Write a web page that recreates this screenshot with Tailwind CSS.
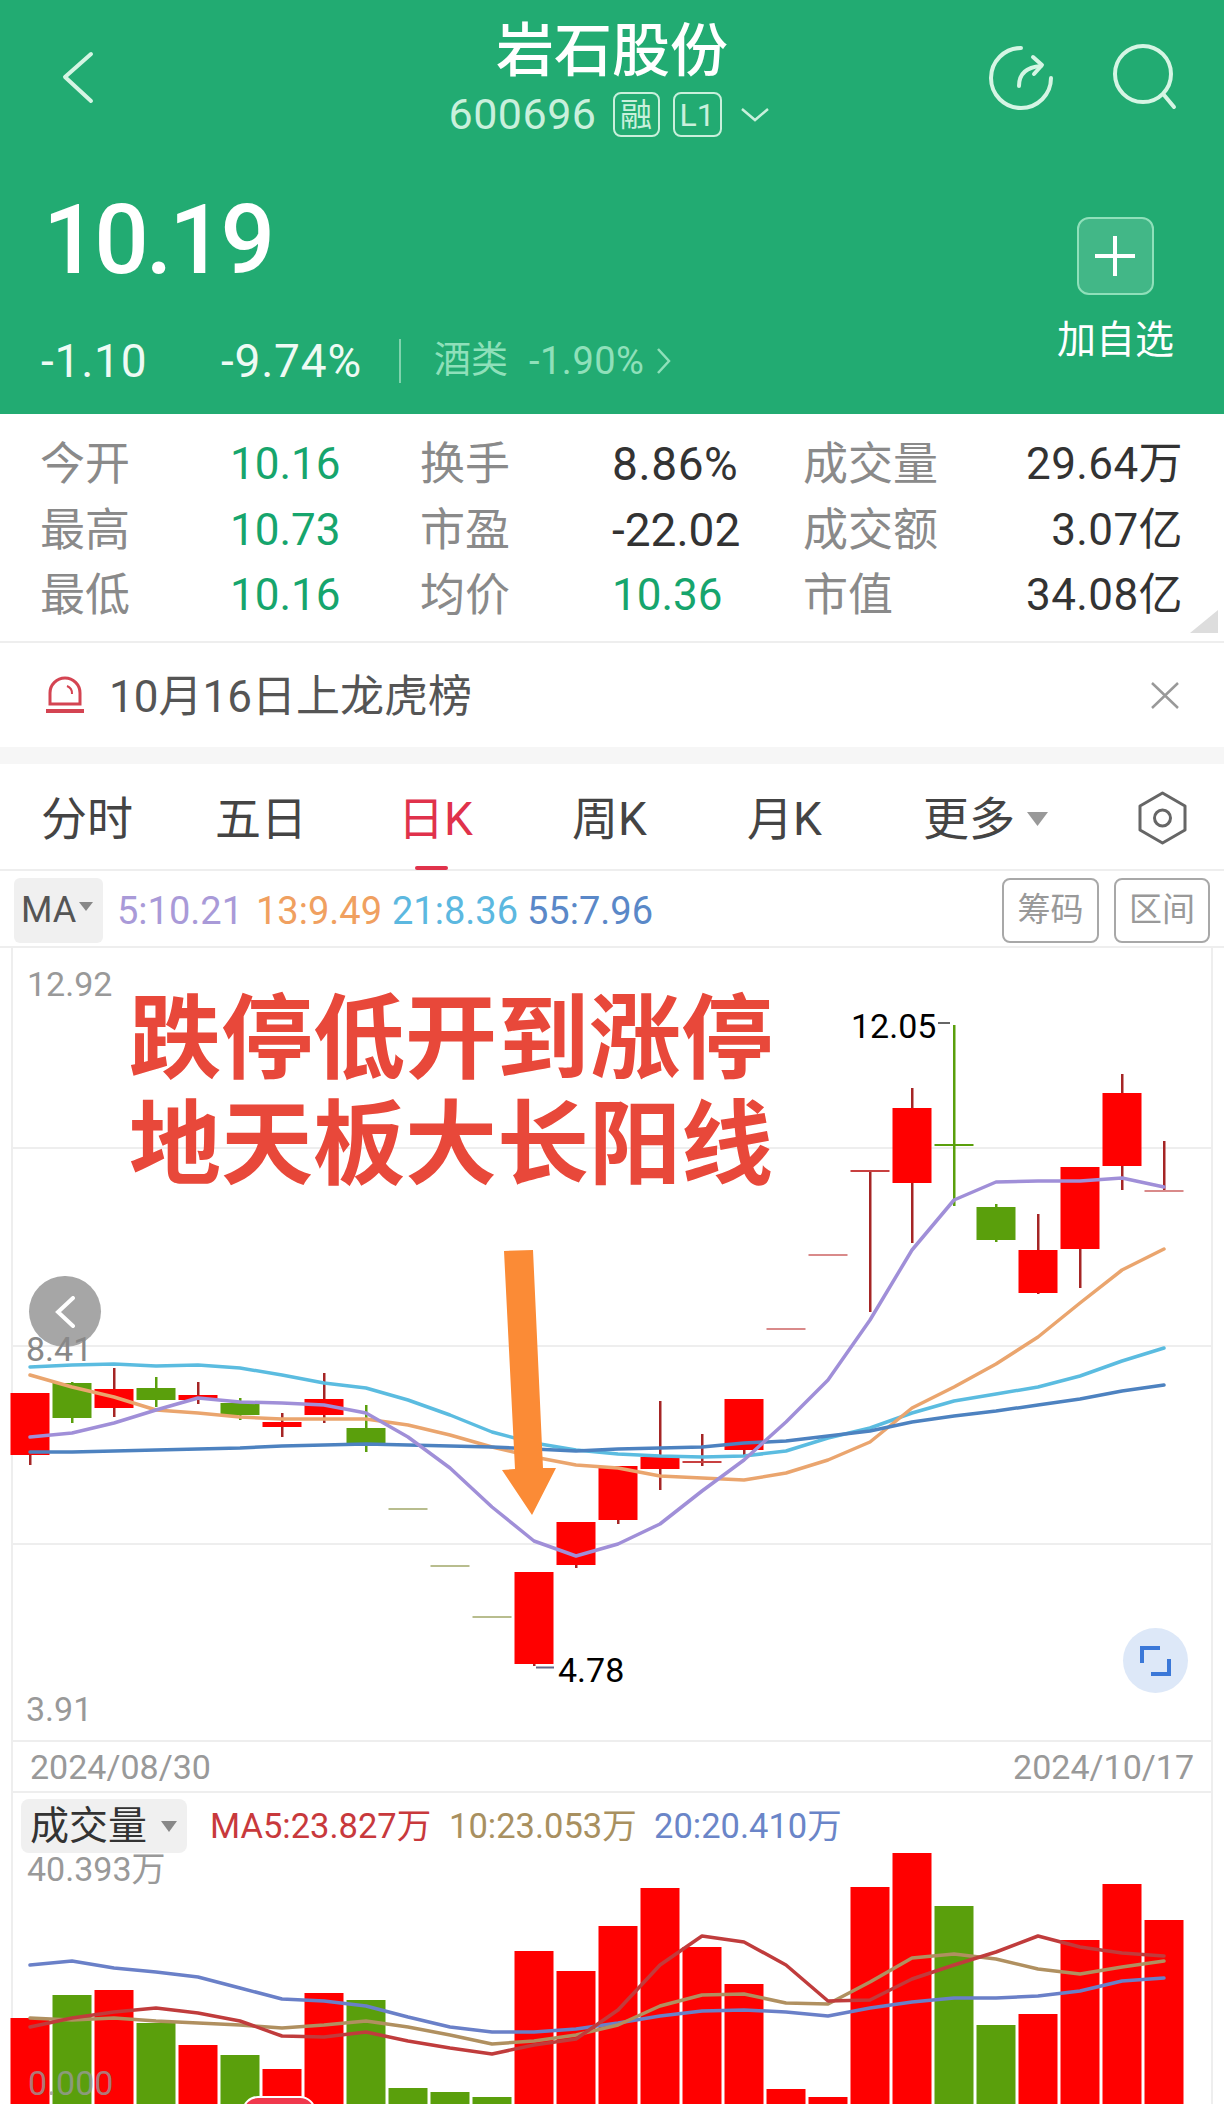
<!DOCTYPE html>
<html lang="zh">
<head>
    <meta charset="UTF-8">
    <meta name="viewport" content="width=device-width, initial-scale=1.0">
    <title>岩石股份 600696</title>
    <script src="https://cdn.jsdelivr.net/npm/@tailwindcss/browser@4"></script>
</head>
<body class="bg-white">
<div class="w-[1224px] h-[2104px] overflow-hidden relative bg-white font-['Roboto','Noto_Sans_CJK_SC',sans-serif]">

    <!-- 顶部绿色行情区 -->
    <header class="h-[414px] bg-[#22ab72] text-white">
        <div class="h-[150px] grid grid-cols-[1fr_auto_1fr]">
            <div class="pl-[58px] pt-[45px]">
                <svg width="40" height="65" viewBox="58 45 40 65" fill="none" stroke="#d5f5e4" stroke-width="4" stroke-linecap="round" stroke-linejoin="round"><path d="M91 54 L65 77 L91 101"/></svg>
            </div>
            <div class="pt-[21px] flex flex-col items-center">
                <div class="text-[58px] leading-[60px] font-medium">岩石股份</div>
                <div class="mt-[11px] h-[45px] pr-[7px] flex items-center text-[#c9f0dc]">
                    <span class="text-[43px] leading-[45px] tracking-[0.5px]">600696</span>
                    <span class="ml-[16px] w-[47px] h-[45px] border-2 border-[#c9f0dc] rounded-lg flex items-center justify-center text-[32px] leading-none">融</span>
                    <span class="ml-[13px] w-[49px] h-[45px] border-2 border-[#c9f0dc] rounded-lg flex items-center justify-center text-[32px] leading-none">L1</span>
                    <svg class="ml-[19px]" width="28" height="14" viewBox="0 0 28 14" fill="none" stroke="#c9f0dc" stroke-width="2.5"><path d="M1 1 L14 12 L27 1"/></svg>
                </div>
            </div>
            <div class="flex justify-end pr-[44px] pt-[40px] gap-[50px]">
                <svg width="75" height="75" viewBox="985 40 75 75" fill="none" stroke="#d5f5e4" stroke-width="4" stroke-linecap="round" stroke-linejoin="round">
                    <path d="M1021 48 A30 30 0 1 0 1051 78"/>
                    <path d="M1019 86 C1019 73 1027 67 1041 66"/>
                    <path d="M1033 57 L1042 65 L1034 74"/>
                </svg>
                <svg width="70" height="75" viewBox="1110 40 70 75" fill="none" stroke="#d5f5e4" stroke-width="4" stroke-linecap="round">
                    <circle cx="1143" cy="74" r="28"/>
                    <path d="M1164 95 L1174 107"/>
                </svg>
            </div>
        </div>
        <div class="h-[264px] flex justify-between pl-[41px] pr-[50px]">
            <div>
                <div class="pt-[42px] pl-[2px] text-[96px] leading-[96px] tracking-[-3.2px] font-medium">10.19</div>
                <div class="mt-[51px] h-[44px] flex items-center text-[46px] leading-[44px] tracking-[0.8px]">
                    <span class="w-[180px] text-[#eefaf4]">-1.10</span>
                    <span class="w-[178px] text-[#eefaf4]">-9.74%</span>
                    <span class="w-[2px] h-[44px] bg-[#7fd3ad]"></span>
                    <span class="ml-[33px] text-[37px] tracking-normal text-[#8fe0ba]">酒类</span>
                    <span class="ml-[21px] text-[38px] tracking-[0.5px] text-[#8fe0ba]">-1.90%</span>
                    <svg class="ml-[13px]" width="14" height="26" viewBox="0 0 14 26" fill="none" stroke="#8fe0ba" stroke-width="2.5"><path d="M1 1 L12 13 L1 25"/></svg>
                </div>
            </div>
            <div class="flex flex-col items-center pt-[67px]">
                <div class="w-[77px] h-[78px] rounded-xl border-2 border-[#8fe0ba] bg-white/15 flex items-center justify-center">
                    <svg width="40" height="40" viewBox="0 0 40 40" stroke="#ffffff" stroke-width="4"><path d="M0 20 H40 M20 0 V40"/></svg>
                </div>
                <div class="mt-[25px] text-[39px] leading-[40px] whitespace-nowrap">加自选</div>
            </div>
        </div>
    </header>

    <!-- 盘口数据 -->
    <section class="relative h-[229px] pt-[18px] pl-[40px] pr-[41px] border-b-2 border-[#eeeeee]">
        <div class="grid grid-cols-[190px_190px_192px_191px_1fr_auto] auto-rows-[65.5px] items-center text-[45px] leading-[65px] text-[#8a8a8a]">
            <span>今开</span><span class="text-[#16a56d] text-[44px]">10.16</span><span>换手</span><span class="text-[#333333] text-[46px] tracking-[0.6px]">8.86%</span><span>成交量</span><span class="text-[#333333] text-[44px] tracking-[0.4px] text-right">29.64万</span>
            <span>最高</span><span class="text-[#16a56d] text-[44px]">10.73</span><span>市盈</span><span class="text-[#333333] text-[46px]">-22.02</span><span>成交额</span><span class="text-[#333333] text-[44px] tracking-[0.4px] text-right">3.07亿</span>
            <span>最低</span><span class="text-[#16a56d] text-[44px]">10.16</span><span>均价</span><span class="text-[#16a56d] text-[44px]">10.36</span><span>市值</span><span class="text-[#333333] text-[44px] tracking-[0.4px] text-right">34.08亿</span>
        </div>
        <svg class="absolute right-[6px] bottom-[8px]" width="28" height="23" viewBox="0 0 28 23"><polygon points="28,0 28,23 0,23" fill="#dddddd"/></svg>
    </section>

    <!-- 提示条 -->
    <div class="h-[104px] flex items-center justify-between pl-[45px] pr-[45px]">
        <div class="flex items-center">
            <svg width="40" height="42" viewBox="45 674 40 42" fill="none" stroke="#d44452" stroke-width="3">
                <path d="M50 704 V693 A15 15 0 0 1 80 693 V704 Z"/>
                <path d="M67 686 A8 8 0 0 1 72 694" stroke-width="2"/>
                <path d="M46 711 H84" stroke-width="4"/>
            </svg>
            <span class="ml-[24px] mt-[4px] text-[44px] leading-[50px] text-[#555555]">10月16日上龙虎榜</span>
        </div>
        <svg width="28" height="27" viewBox="0 0 28 27" stroke="#999999" stroke-width="2.5"><path d="M1 1 L27 26 M27 1 L1 26"/></svg>
    </div>
    <div class="h-[17px] bg-[#f6f6f6]"></div>

    <!-- 周期切换 -->
    <nav class="h-[107px] pl-[41px] pt-[25px] border-b-2 border-[#eeeeee] grid grid-cols-[174px_183px_174px_175px_176px_214px_auto] items-start text-[46px] leading-[60px] text-[#444444]">
        <span>分时</span>
        <span>五日</span>
        <span class="relative text-[#e0324b]">日K<i class="absolute left-[17px] top-[77px] w-[33px] h-[4px] rounded-full bg-[#e0324b]"></i></span>
        <span>周K</span>
        <span>月K</span>
        <span class="h-[60px] flex items-center">更多<svg class="ml-[12px]" width="21" height="14" viewBox="0 0 21 14"><polygon points="0,0 21,0 10.5,14" fill="#999999"/></svg></span>
        <svg width="50" height="54" viewBox="1138 790 50 54" fill="none" stroke="#666666" stroke-width="3" stroke-linejoin="round" class="mt-[2px]">
            <polygon points="1163.5,792 1186,805 1186,829 1163.5,842 1141,829 1141,805"/>
            <circle cx="1163.5" cy="817" r="8"/>
        </svg>
    </nav>

    <!-- 均线数值 -->
    <div class="h-[77px] pt-[3px] flex items-center justify-between pl-[14px] pr-[14px] border-b-2 border-[#eeeeee] text-[38px] leading-[40px]">
        <div class="flex items-center">
            <span class="w-[89px] h-[65px] rounded-md bg-[#f0f0f0] flex items-center pl-[7px] text-[#555555] text-[36px]">MA<svg class="ml-[3px] mb-[8px]" width="14" height="9" viewBox="0 0 14 9"><polygon points="0,0 14,0 7,9" fill="#888888"/></svg></span>
            <span class="ml-[14px] mt-[2px] w-[139px] text-[#a99ad8]">5:10.21</span>
            <span class="mt-[2px] w-[136px] text-[#f0a060]">13:9.49</span>
            <span class="mt-[2px] w-[135px] text-[#5cb8e0]">21:8.36</span>
            <span class="mt-[2px] text-[#5a88c8]">55:7.96</span>
        </div>
        <div class="flex gap-[15px] text-[33px] text-[#999999]">
            <span class="w-[97px] h-[65px] rounded-lg border-2 border-[#a8a8a8] flex items-center justify-center">筹码</span>
            <span class="w-[96px] h-[65px] rounded-lg border-2 border-[#a8a8a8] flex items-center justify-center">区间</span>
        </div>
    </div>

    <!-- K线图 -->
    <div class="relative h-[794px]">
        <svg id="kline" class="block" width="1224" height="794" viewBox="0 948 1224 794" fill="none"></svg>
        <span class="absolute left-[27px] top-[16px] text-[34px] leading-[40px] text-[#999999]">12.92</span>
        <span class="absolute left-[29px] top-[328px] w-[72px] h-[71px] rounded-full bg-[#a6a6a6] flex items-center justify-center">
            <svg width="20" height="32" viewBox="0 0 20 32" fill="none" stroke="#ffffff" stroke-width="4" stroke-linecap="round"><path d="M18 2 L3 16 L18 30"/></svg>
        </span>
        <span class="absolute left-[26px] top-[381px] text-[34px] leading-[40px] text-[#888888]">8.41</span>
        <span class="absolute left-[26px] top-[741px] text-[34px] leading-[40px] text-[#999999]">3.91</span>
        <span class="absolute left-[851px] top-[58px] text-[34px] leading-[40px] text-black">12.05</span>
        <span class="absolute left-[558px] top-[702px] text-[34px] leading-[40px] text-black">4.78</span>
        <div class="absolute left-[129px] top-[39px] text-[92px] leading-[106px] font-bold text-[#e8483a] whitespace-nowrap">跌停低开到涨停<br>地天板大长阳线</div>
        <span class="absolute left-[1123px] top-[680px] w-[65px] h-[65px] rounded-full bg-[#dde8f8] flex items-center justify-center">
            <svg width="31" height="30" viewBox="0 0 31 30" fill="none" stroke="#3b78d8" stroke-width="4"><path d="M2 17 V2 H20"/><path d="M29 13 V28 H11"/></svg>
        </span>
    </div>

    <!-- 日期 -->
    <div class="h-[51px] ml-[11px] w-[1202px] border-x-2 border-b-2 border-[#eeeeee] flex items-center justify-between pl-[17px] pr-[17px] text-[34px] leading-[40px] text-[#999999]">
        <span>2024/08/30</span>
        <span>2024/10/17</span>
    </div>

    <!-- 成交量 -->
    <div class="relative h-[311px]">
        <svg id="volume" class="block" width="1224" height="311" viewBox="0 1793 1224 311" fill="none"></svg>
        <div class="absolute left-[21px] top-[6px] flex items-center text-[34.5px] leading-[40px]">
            <span class="w-[166px] h-[54px] rounded-lg bg-[#f0f0f0] flex items-center pl-[9px] text-[39px] text-[#333333]">成交量<svg class="ml-[14px]" width="16" height="11" viewBox="0 0 16 11"><polygon points="0,0 16,0 8,11" fill="#888888"/></svg></span>
            <span class="ml-[23px] w-[239px] text-[#c8393c]">MA5:23.827万</span>
            <span class="w-[205px] text-[#a89060]">10:23.053万</span>
            <span class="text-[#6a85c8]">20:20.410万</span>
        </div>
        <span class="absolute left-[27px] top-[56px] text-[34px] leading-[40px] text-[#999999]">40.393万</span>
        <span class="absolute left-[28px] top-[277px] text-[34px] leading-[27px] text-[#999999]/80">0.000</span>
        <span class="absolute left-[242px] top-[303px] w-[74px] h-[20px] rounded-t-2xl bg-[#f0394d] border-2 border-white"></span>
    </div>
</div>

<script>
    const RED = '#ff0000', GREEN = '#5a9f0c', WICK = '#a52525';
    const xAt = i => 30 + 42 * i;
    const points = ys => ys.map((y, i) => xAt(i) + ',' + y).join(' ');
    const line = (ys, color, w) => `<polyline points="${points(ys)}" stroke="${color}" stroke-width="${w}" stroke-linejoin="round" stroke-linecap="round"/>`;

    // [实体上沿, 实体下沿, 影线上, 影线下, 类型] r阳 g阴 o/p平盘
    const candles = [
        [1393,1455,1393,1465,'r'],[1383,1418,1382,1423,'g'],[1389,1408,1368,1417,'r'],[1388,1400,1377,1407,'g'],
        [1395,1400,1382,1404,'r'],[1403,1415,1398,1420,'g'],[1422,1427,1413,1437,'r'],[1399,1415,1373,1423,'r'],
        [1428,1443,1405,1452,'g'],[1508,1510,0,0,'o'],[1565,1567,0,0,'o'],[1616,1618,0,0,'o'],
        [1572,1664,1572,1666,'r'],[1522,1565,1522,1568,'r'],[1466,1520,1466,1524,'r'],[1457,1469,1401,1490,'r'],
        [1461,1463,1434,1466,'r'],[1399,1450,1399,1455,'r'],[1328,1330,0,0,'p'],[1254,1256,0,0,'p'],
        [1170,1172,1171,1312,'r'],[1108,1183,1088,1243,'r'],[1144,1146,1025,1206,'g'],[1207,1240,1204,1242,'g'],
        [1250,1293,1214,1294,'r'],[1167,1249,1167,1288,'r'],[1093,1166,1074,1190,'r'],[1190,1192,1141,1192,'p']
    ];

    const ma5 = [1437,1433,1423,1410,1398,1402,1403,1405,1413,1437,1468,1507,1541,1556,1544,1524,1491,1460,1422,1380,1320,1250,1200,1182,1181,1181,1178,1187];
    const ma13 = [1375,1387,1397,1410,1413,1417,1419,1419,1419,1425,1435,1447,1457,1465,1468,1476,1478,1480,1473,1460,1442,1408,1387,1364,1337,1303,1270,1249];
    const ma21 = [1367,1365,1364,1366,1365,1368,1375,1383,1388,1400,1415,1432,1443,1450,1454,1456,1457,1456,1451,1438,1428,1413,1401,1394,1387,1376,1361,1348];
    const ma55 = [1452,1452,1451,1450,1449,1448,1446,1445,1444,1445,1446,1447,1449,1451,1449,1448,1447,1443,1441,1436,1431,1422,1416,1411,1405,1399,1391,1385];

    let k = '';
    // 边框和网格线
    [1148, 1346, 1544].forEach(y => k += `<path d="M12 ${y} H1212" stroke="#eeeeee" stroke-width="2"/>`);
    k += '<path d="M12 948 V1742 M1212 948 V1742 M12 1741 H1212" stroke="#eeeeee" stroke-width="2"/>';
    candles.forEach((c, i) => {
        const x = xAt(i);
        const thin = c[1] - c[0] <= 2;
        const body = c[4] === 'g' ? GREEN : c[4] === 'r' ? RED : c[4] === 'o' ? '#b8bd8e' : '#d98a8a';
        const wick = c[4] === 'g' ? GREEN : WICK;
        if (c[2]) k += `<rect x="${x - 1}" y="${c[2]}" width="2.5" height="${c[3] - c[2]}" fill="${wick}"/>`;
        const fill = thin && c[4] === 'r' ? '#c84040' : body;
        k += `<rect x="${x - 19.5}" y="${c[0]}" width="39" height="${c[1] - c[0]}" fill="${fill}"/>`;
    });
    k += '<path d="M938 1023 H950" stroke="#666666" stroke-width="2"/><path d="M536 1667.5 H554" stroke="#666688" stroke-width="2"/>';
    k += line(ma21, '#5bbce0', 3.5) + line(ma13, '#eaa56e', 3.5) + line(ma55, '#4d82c0', 3.5) + line(ma5, '#a08fd8', 3.5);
    k += '<polygon points="504,1251 533,1250 543,1468 556,1468 532,1515 502,1470 515,1469" fill="#fb8b36"/>';
    document.getElementById('kline').innerHTML = k;

    const vols = [
        [2018,'r'],[1995,'g'],[1990,'r'],[2023,'g'],[2045,'r'],[2055,'g'],[2069,'r'],[1993,'r'],[2000,'g'],[2088,'g'],
        [2092,'g'],[2097,'g'],[1951,'r'],[1971,'r'],[1926,'r'],[1888,'r'],[1947,'r'],[1984,'r'],[2089,'r'],[2097,'r'],
        [1887,'r'],[1853,'r'],[1906,'g'],[2025,'g'],[2014,'r'],[1940,'r'],[1884,'r'],[1920,'r']
    ];
    const v5 = [2027,2018,2012,2008,2013,2021,2036,2037,2032,2041,2048,2054,2045,2039,2010,1965,1936,1942,1965,2001,2000,1979,1965,1952,1936,1947,1953,1956];
    const v10 = [2018,2020,2018,2021,2023,2025,2028,2025,2021,2027,2035,2044,2041,2035,2025,2006,1995,1994,2003,2004,1982,1958,1954,1959,1969,1974,1967,1961];
    const v20 = [1965,1961,1968,1972,1977,1988,1999,2001,2006,2017,2027,2032,2032,2029,2023,2016,2011,2010,2012,2016,2008,2002,1998,1998,1996,1991,1981,1978];

    let v = '<path d="M12 1793 V2104 M1212 1793 V2104" stroke="#eeeeee" stroke-width="2"/>';
    vols.forEach((b, i) => {
        v += `<rect x="${xAt(i) - 19.5}" y="${b[0]}" width="39" height="${2104 - b[0]}" fill="${b[1] === 'r' ? RED : GREEN}"/>`;
    });
    v += line(v20, '#6a80c8', 3.5) + line(v10, '#b09060', 3.5) + line(v5, '#c03c3c', 3.5);
    document.getElementById('volume').innerHTML = v;
</script>
</body>
</html>
